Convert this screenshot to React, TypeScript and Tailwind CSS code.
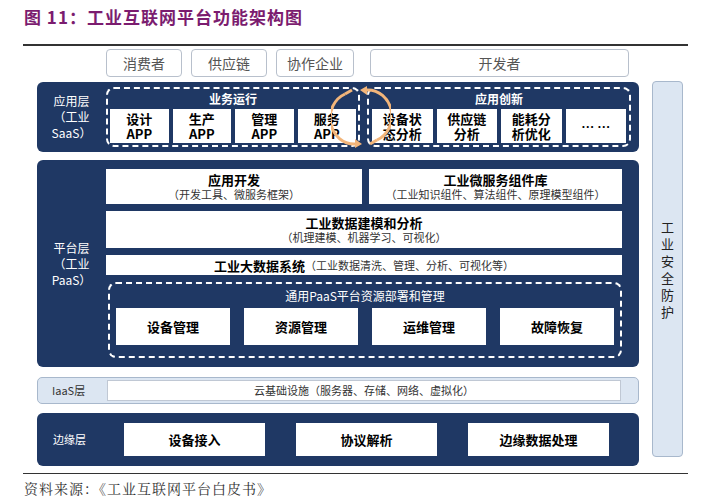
import React from "react";

const F = { fontFamily: '"Noto Sans CJK SC", "Noto Sans", sans-serif' };

function WBox({ className = "", children }: { className?: string; children: React.ReactNode }) {
  return <div className={`bg-white flex flex-col items-center justify-center text-black leading-[15px] ${className}`}>{children}</div>;
}

export default function App() {
  return (
    <div className="w-[711px] h-[500px] bg-white relative overflow-hidden" style={F}>
      <div className="pt-[4px] pl-[24px] text-[17px] font-bold text-[#7b1c6f] tracking-[1px] leading-[26px]">图 11：工业互联网平台功能架构图</div>
      <div className="mx-[23px] mt-[14px] h-[2px] bg-[#333]" />
      <div className="flex mt-[3px] ml-[37px] gap-[13px]">
        <div className="w-[602px] flex flex-col">
          <div className="flex h-[28px] pl-[69px] gap-[9px] text-[14px] text-[#555]">
            {["消费者", "供应链", "协作企业"].map((t, i) => (
              <div key={t} className={`border border-[#b8c0cc] rounded-[4px] flex items-center justify-center ${i === 2 ? "w-[78px]" : "w-[76px]"}`}>{t}</div>
            ))}
            <div className="ml-[7px] w-[259px] border border-[#b8c0cc] rounded-[4px] flex items-center justify-center">开发者</div>
          </div>
          <div className="relative mt-[5px] h-[70px] bg-[#1f3864] rounded-[6px] flex items-center">
            <div className="w-[69px] text-white text-[12px] text-center leading-[16px]">应用层<br />（工业SaaS）</div>
            <div className="w-[254px] h-[60px] border-2 border-dashed border-white rounded-[8px] flex flex-col items-center px-[2px]">
              <div className="text-white text-[12px] font-bold leading-[20px]">业务运行</div>
              <div className="flex gap-[4px] w-full">
                {["设计", "生产", "管理", "服务"].map((t) => (
                  <WBox key={t} className="flex-1 h-[34px] text-[13px] font-bold !leading-[15px]"><span className="leading-[15px]">{t}</span><span className="leading-[15px]">APP</span></WBox>
                ))}
              </div>
            </div>
            <div className="ml-[7px] w-[264px] h-[60px] border-2 border-dashed border-white rounded-[8px] flex flex-col items-center px-[3px]">
              <div className="text-white text-[12px] font-bold leading-[20px]">应用创新</div>
              <div className="flex gap-[4px] w-full">
                {[["设备状", "态分析"], ["供应链", "分析"], ["能耗分", "析优化"], ["… …", ""]].map(([a, b]) => (
                  <WBox key={a} className="flex-1 h-[34px] text-[13px] font-bold"><span className="leading-[15px]">{a}</span>{b && <span className="leading-[15px]">{b}</span>}</WBox>
                ))}
              </div>
            </div>
            <svg className="absolute left-[294px] top-[4px]" width="60" height="62" viewBox="0 0 60 62">
              <path d="M14 8 A24 26 0 0 0 24 58" fill="none" stroke="#f2b57a" strokeWidth="3" />
              <path d="M46 54 A24 26 0 0 0 36 4" fill="none" stroke="#f2b57a" strokeWidth="3" />
              <path d="M36 0 l0 9 l-7 -5z" fill="#f2b57a" />
              <path d="M24 62 l0 -9 l7 5z" fill="#f2b57a" />
              <path d="M14 8 l7 -4" stroke="#f2b57a" strokeWidth="3" />
              <path d="M46 54 l-7 4" stroke="#f2b57a" strokeWidth="3" />
            </svg>
          </div>
          <div className="mt-[8px] h-[207px] bg-[#1f3864] rounded-[6px] flex items-center">
            <div className="w-[69px] text-white text-[12px] text-center leading-[16px] shrink-0">平台层<br />（工业PaaS）</div>
            <div className="flex flex-col w-[516px] gap-[7px]">
              <div className="flex gap-[7px] h-[35px]">
                <WBox className="w-[256px] text-[12px]"><b className="text-[13px]">应用开发</b><span className="text-[11px] text-[#333]">（开发工具、微服务框架）</span></WBox>
                <WBox className="flex-1 text-[12px]"><b className="text-[13px]">工业微服务组件库</b><span className="text-[11px] text-[#333]">（工业知识组件、算法组件、原理模型组件）</span></WBox>
              </div>
              <WBox className="h-[37px]"><b className="text-[13px]">工业数据建模和分析</b><span className="text-[11px] text-[#333]">（机理建模、机器学习、可视化）</span></WBox>
              <WBox className="h-[20px] !flex-row"><b className="text-[13px]">工业大数据系统</b><span className="text-[11px] text-[#333]">（工业数据清洗、管理、分析、可视化等）</span></WBox>
              <div className="ml-[2px] h-[76px] border-2 border-dashed border-white rounded-[8px] flex flex-col items-center">
                <div className="text-white text-[12px] leading-[24px]">通用PaaS平台资源部署和管理</div>
                <div className="flex gap-[14px] px-[6px] w-full">
                  {["设备管理", "资源管理", "运维管理", "故障恢复"].map((t) => (
                    <WBox key={t} className="flex-1 h-[37px] text-[13px] font-bold">{t}</WBox>
                  ))}
                </div>
              </div>
            </div>
          </div>
          <div className="mt-[10px] h-[27px] bg-[#dce6f2] border border-[#a8b8cc] rounded-[5px] flex items-center">
            <div className="w-[69px] text-[11px] text-[#333] pl-[14px]">IaaS层</div>
            <div className="w-[514px] h-[21px] bg-white border border-[#c0c8d4] flex items-center justify-center text-[11px] text-[#333]">云基础设施（服务器、存储、网络、虚拟化）</div>
          </div>
          <div className="mt-[9px] h-[53px] bg-[#1f3864] rounded-[6px] flex items-center">
            <div className="w-[87px] text-white text-[11px] pl-[16px]">边缘层</div>
            <div className="flex gap-[31px]">
              {["设备接入", "协议解析", "边缘数据处理"].map((t) => (
                <WBox key={t} className="w-[141px] h-[33px] text-[13px] font-bold">{t}</WBox>
              ))}
            </div>
          </div>
        </div>
        <div className="mt-[32px] w-[31px] h-[376px] bg-[#dce6f2] border border-[#a8b8cc] rounded-[4px] flex items-center justify-center">
          <div className="text-[13px] text-[#222] leading-[17px] w-[14px] text-center">工业安全防护</div>
        </div>
      </div>
      <div className="mx-[23px] mt-[7px] h-[1px] bg-[#333]" />
      <div className="pl-[24px] pt-[4px] text-[14px] text-[#333] tracking-[1px]" style={{ fontFamily: '"Noto Serif CJK SC", "Noto Sans CJK SC", serif' }}>资料来源：《工业互联网平台白皮书》</div>
    </div>
  );
}
